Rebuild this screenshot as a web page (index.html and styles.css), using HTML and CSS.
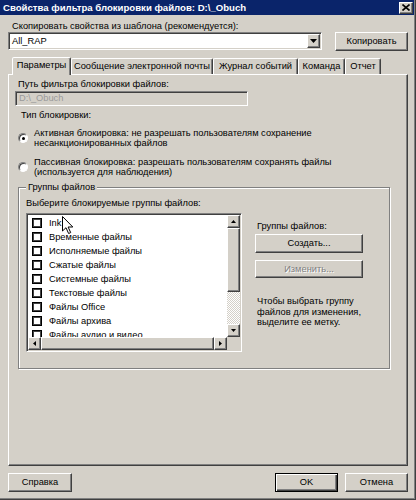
FILE: index.html
```html
<!DOCTYPE html>
<html lang="ru">
<head>
  <meta charset="UTF-8" />
  <title>Свойства фильтра блокировки файлов</title>
  <link rel="stylesheet" href="styles.css">
</head>
<body>
  <div class="window">
    <div class="titlebar">
      <span class="title">Свойства фильтра блокировки файлов: D:\_Obuch</span>
      <span class="close raised">
        <svg width="8" height="7" viewBox="0 0 8 7"><path d="M0.5 0.5l7 6M7.5 0.5l-7 6" stroke="#000" stroke-width="1.6"/></svg>
      </span>
    </div>

    <div class="content">
      <div class="tpl-label">Скопировать свойства из шаблона (рекомендуется):</div>
      <div class="tpl-row">
        <div class="combo sunken">
          <span class="combo-text">All_RAP</span>
          <span class="combo-btn raised">
            <svg width="7" height="4" viewBox="0 0 7 4"><path d="M0 0h7L3.5 4z"/></svg>
          </span>
        </div>
        <button class="btn raised copy">Копировать</button>
      </div>

      <div class="tabs">
        <div class="tab active" style="width:59px">Параметры</div>
        <div class="tab" style="width:142px">Сообщение электронной почты</div>
        <div class="tab" style="width:85px">Журнал событий</div>
        <div class="tab" style="width:47px">Команда</div>
        <div class="tab" style="width:36px">Отчет</div>
      </div>

      <div class="panel">
        <div class="path-label">Путь фильтра блокировки файлов:</div>
        <div class="path-edit sunken">D:\_Obuch</div>

        <div class="type-label">Тип блокировки:</div>
        <div class="radio-row first">
          <span class="radio checked"></span>
          <span class="radio-text">Активная блокировка: не разрешать пользователям сохранение<br>несанкционированных файлов</span>
        </div>
        <div class="radio-row">
          <span class="radio"></span>
          <span class="radio-text">Пассивная блокировка: разрешать пользователям сохранять файлы<br>(используется для наблюдения)</span>
        </div>

        <fieldset class="group">
          <legend>Группы файлов</legend>
          <div class="group-body">
            <div class="group-left">
              <div class="list-label">Выберите блокируемые группы файлов:</div>
              <div class="listbox sunken">
                <div class="items">
                  <div class="item"><span class="check"></span>Ink</div>
                  <div class="item"><span class="check"></span>Временные файлы</div>
                  <div class="item"><span class="check"></span>Исполняемые файлы</div>
                  <div class="item"><span class="check"></span>Сжатые файлы</div>
                  <div class="item"><span class="check"></span>Системные файлы</div>
                  <div class="item"><span class="check"></span>Текстовые файлы</div>
                  <div class="item"><span class="check"></span>Файлы Office</div>
                  <div class="item"><span class="check"></span>Файлы архива</div>
                  <div class="item"><span class="check"></span>Файлы аудио и видео</div>
                </div>
                <div class="vscroll">
                  <span class="sb-btn raised"><svg width="5" height="3" viewBox="0 0 5 3"><path d="M0 3h5L2.5 0z"/></svg></span>
                  <span class="sb-thumb raised"></span>
                  <span class="sb-track"></span>
                  <span class="sb-btn raised"><svg width="5" height="3" viewBox="0 0 5 3"><path d="M0 0h5L2.5 3z"/></svg></span>
                </div>
                <div class="hscroll">
                  <span class="sb-btn raised"><svg width="3" height="5" viewBox="0 0 3 5"><path d="M3 0v5L0 2.5z"/></svg></span>
                  <span class="sb-thumb raised"></span>
                  <span class="sb-btn raised"><svg width="3" height="5" viewBox="0 0 3 5"><path d="M0 0v5L3 2.5z"/></svg></span>
                </div>
                <div class="corner"></div>
              </div>
            </div>

            <div class="group-right">
              <div class="right-label">Группы файлов:</div>
              <button class="btn raised wide create">Создать...</button>
              <button class="btn raised wide disabled">Изменить...</button>
              <div class="hint">Чтобы выбрать группу<br>файлов для изменения,<br>выделите ее метку.</div>
            </div>
          </div>
        </fieldset>
      </div>

      <div class="footer">
        <button class="btn raised help">Справка</button>
        <span class="spacer"></span>
        <button class="btn ok">OK</button>
        <button class="btn raised cancel">Отмена</button>
      </div>
    </div>

    <svg class="cursor" width="12" height="18" viewBox="0 0 12 18">
      <path d="M0.5 0.5v14.5l3.5-3.3 2.6 5.8 2.1-0.9-2.6-5.6h4.7z" fill="#fff" stroke="#000" stroke-width="1"/>
    </svg>
  </div>
</body>
</html>
```

FILE: styles.css
```css
body {
  margin: 0;
  font-family: "Liberation Sans", Arial, sans-serif;
  font-size: 9.3px;
  line-height: 11px;
  color: #000;
  background: #d4d0c8;
}
.window {
  position: relative;
  width: 416px;
  height: 500px;
  background: #d4d0c8;
  box-shadow: inset -1px -1px #404040, inset -2px -2px #808080;
  overflow: hidden;
}

/* 3d edges */
.raised {
  background: #d4d0c8;
  border: 1px solid;
  border-color: #fff #404040 #404040 #fff;
  box-shadow: inset -1px -1px #808080;
  box-sizing: border-box;
}
.sunken {
  border: 1px solid;
  border-color: #808080 #fff #fff #808080;
  box-shadow: inset 1px 1px #404040, inset -1px -1px #d4d0c8;
  box-sizing: border-box;
}

.titlebar {
  height: 15px;
  margin-right: 2px;
  padding: 0 1px 0 3px;
  background: #0a246a;
  display: flex;
  align-items: center;
  justify-content: space-between;
}
.title {
  color: #fff;
  font-weight: bold;
  font-size: 9.6px;
}
.close {
  width: 14px;
  height: 12px;
  display: flex;
  align-items: center;
  justify-content: center;
}

.content {
  padding: 0 8px;
}
.btn {
  font: inherit;
  color: #000;
  padding: 0;
  margin: 0;
  height: 19px;
  text-align: center;
}
.tpl-label {
  margin: 6px 0 0 4px;
}
.tpl-row {
  display: flex;
  justify-content: space-between;
}
.combo {
  width: 314px;
  height: 18px;
  padding: 1px 1px 1px 3px;
  background: #fff;
  display: flex;
  align-items: center;
}
.combo-text {
  flex: 1;
}
.combo-btn {
  width: 13px;
  height: 14px;
  display: flex;
  align-items: center;
  justify-content: center;
}
.copy {
  width: 73px;
}

.tabs {
  display: flex;
  align-items: flex-end;
  height: 17px;
  margin-top: 6px;
  padding-left: 4px;
}
.tab {
  height: 16px;
  box-sizing: border-box;
  border: 1px solid;
  border-bottom: none;
  border-color: #fff #404040 transparent #fff;
  border-radius: 2px 2px 0 0;
  box-shadow: inset -1px 0 #808080;
  text-align: center;
  line-height: 14px;
  white-space: nowrap;
}
.tab.active {
  position: relative;
  z-index: 1;
  height: 18px;
  margin-bottom: -1px;
  line-height: 15px;
  background: #d4d0c8;
}

.panel {
  height: 392px;
  box-sizing: border-box;
  padding: 4px 0 0 6px;
  border: 1px solid;
  border-color: #fff #404040 #404040 #fff;
  box-shadow: inset -1px -1px #808080;
}
.path-label {
  margin-left: 3px;
}
.path-edit {
  width: 233px;
  height: 15px;
  margin-top: 1px;
  padding-left: 3px;
  line-height: 13px;
  color: #9a9a9a;
}
.type-label {
  margin: 4px 0 0 6px;
}
.radio-row {
  display: flex;
  align-items: center;
  gap: 6px;
  margin: 9px 0 0 3px;
  line-height: 10px;
}
.radio-row.first {
  margin-top: 7px;
}
.radio {
  position: relative;
  width: 10px;
  height: 10px;
  box-sizing: border-box;
  border-radius: 50%;
  border: 1px solid;
  border-color: #808080 #fff #fff #808080;
  box-shadow: inset 1px 1px #404040;
  background: #fff;
}
.radio.checked::after {
  content: "";
  position: absolute;
  left: 2.5px;
  top: 2.5px;
  width: 3px;
  height: 3px;
  border-radius: 50%;
  background: #000;
}

.group {
  width: 372px;
  box-sizing: border-box;
  margin: 5px 0 0 3px;
  padding: 0 7px 16px 7px;
  border: 1px solid #808080;
  box-shadow: inset 1px 1px #fff, 1px 1px #fff;
  min-width: 0;
}
.group legend {
  padding: 0 2px;
  background: #d4d0c8;
}
.group-body {
  display: flex;
  gap: 13px;
}
.list-label {
  margin-top: 5px;
}
.listbox {
  width: 216px;
  height: 139px;
  margin-top: 4px;
  padding: 1px;
  background: #fff;
  display: grid;
  grid-template-columns: 1fr 13px;
  grid-template-rows: 1fr 13px;
}
.items {
  overflow: hidden;
  padding-top: 1px;
}
.item {
  height: 14px;
  display: flex;
  align-items: center;
  gap: 7px;
  padding-left: 4px;
  white-space: nowrap;
}
.check {
  width: 10px;
  height: 10px;
  box-sizing: border-box;
  border: 1px solid #000;
  box-shadow: inset 0 0 0 1px #444;
  background: #fff;
  flex: none;
}
.vscroll {
  display: flex;
  flex-direction: column;
}
.hscroll {
  display: flex;
}
.sb-btn {
  width: 13px;
  height: 13px;
  flex: none;
  display: flex;
  align-items: center;
  justify-content: center;
}
.vscroll .sb-thumb {
  height: 64px;
  flex: none;
}
.hscroll .sb-thumb {
  flex: 1;
}
.sb-track {
  flex: 1;
  background: repeating-conic-gradient(#d4d0c8 0 25%, #fff 0 50%) 0 0 / 2px 2px;
}
.corner {
  background: #d4d0c8;
}

.group-right {
  display: flex;
  flex-direction: column;
  align-items: flex-start;
}
.right-label {
  margin: 28px 0 0 2px;
}
.wide {
  width: 108px;
}
.create {
  margin-top: 2px;
}
.disabled {
  margin-top: 7px;
  height: 18px;
  color: #808080;
  text-shadow: 1px 1px #fff;
}
.hint {
  margin: 18px 0 0 2px;
  line-height: 10.5px;
}

.footer {
  display: flex;
  gap: 7px;
  margin-top: 7px;
}
.spacer {
  flex: 1;
}
.help {
  width: 64px;
}
.ok {
  width: 63px;
  background: #d4d0c8;
  border: 1px solid #000;
  box-shadow: inset 1px 1px #fff, inset -1px -1px #404040, inset -2px -2px #808080;
  box-sizing: border-box;
}
.cancel {
  width: 63px;
}

.cursor {
  position: absolute;
  left: 62px;
  top: 216px;
}
```
